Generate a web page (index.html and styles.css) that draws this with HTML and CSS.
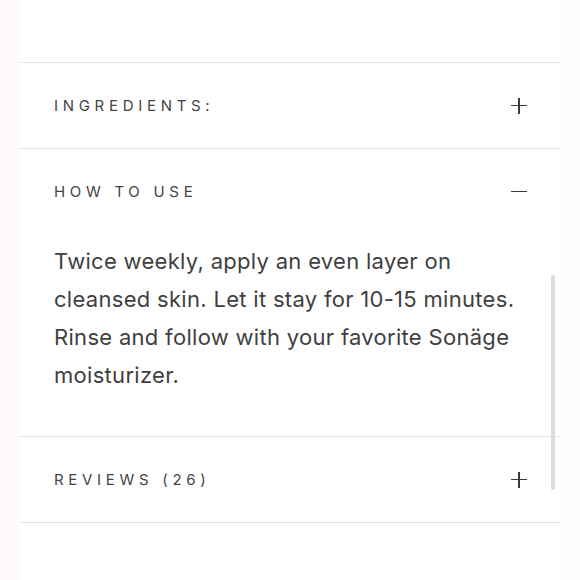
FILE: index.html
```html
<!DOCTYPE html>
<html>
<head>
<meta charset="utf-8">
<link rel="stylesheet" href="styles.css">
</head>
<body>
<div class="page">
  <div class="panel">
    <div class="top"></div>
    <section class="item">
      <div class="head">
        <span class="title">Ingredients:</span>
        <span class="icon plus"></span>
      </div>
    </section>
    <section class="item open">
      <div class="head">
        <span class="title">How to use</span>
        <span class="icon minus"></span>
      </div>
      <p class="body">Twice weekly, apply an even layer on cleansed skin. Let it stay for 10-15 minutes. Rinse and follow with your favorite Sonäge moisturizer.</p>
    </section>
    <section class="item">
      <div class="head">
        <span class="title">Reviews (26)</span>
        <span class="icon plus"></span>
      </div>
    </section>
    <div class="scrollbar"></div>
  </div>
</div>
</body>
</html>
```

FILE: styles.css
```css
html, body {
  margin: 0;
  padding: 0;
}
body {
  width: 580px;
  height: 580px;
  overflow: hidden;
  background: linear-gradient(90deg, #fcf8f7 0px, #fefdfd 20px, #ffffff 60px, #ffffff 540px, #fdfbfb 580px);
  font-family: "Inter", "Liberation Sans", sans-serif;
  color: #3f3f3f;
}
.page {
  padding: 0 20px;
}
.panel {
  position: relative;
  background: #ffffff;
  height: 580px;
}
.top {
  height: 62px;
  border-bottom: 1px solid #e2e2e2;
}
.item {
  border-bottom: 1px solid #e2e2e2;
}
.head {
  height: 85px;
  display: flex;
  align-items: center;
  justify-content: space-between;
  padding: 0 33px 0 34px;
}
.title {
  text-transform: uppercase;
  font-size: 15px;
  letter-spacing: 4.7px;
  color: #444;
}
.icon {
  position: relative;
  width: 16px;
  height: 16px;
}
.icon::before, .plus::after {
  content: "";
  position: absolute;
  background: #3a3a3a;
}
.icon::before {
  left: 0;
  right: 0;
  top: 7px;
  height: 1.6px;
}
.plus::after {
  top: 0;
  bottom: 0;
  left: 7px;
  width: 1.6px;
}
.body {
  margin: 0;
  padding: 8px 30px 42px 34px;
  font-size: 22px;
  letter-spacing: 0.3px;
  line-height: 38px;
  color: #3f3f3f;
}
.scrollbar {
  position: absolute;
  right: 5px;
  top: 275px;
  width: 4px;
  height: 215px;
  border-radius: 2px;
  background: #dcdcdc;
}
```
